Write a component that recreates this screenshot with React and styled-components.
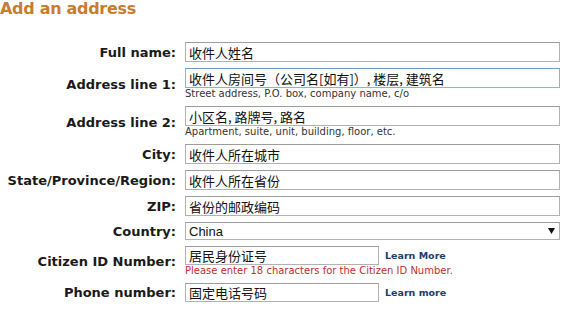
import React from 'react'
import styled, { createGlobalStyle } from 'styled-components'

const GlobalStyle = createGlobalStyle`
  body {
    margin: 0;
    background: #fff;
    font-family: "DejaVu Sans", Verdana, sans-serif;
    color: #111;
  }
`

const Page = styled.div`
  width: 577px;
  height: 319px;
  overflow: hidden;
`

const Title = styled.h1`
  margin: -1px 0 23px 0;
  font-size: 16px;
  line-height: 20px;
  font-weight: bold;
  letter-spacing: -0.3px;
  color: #c77d2e;
`

const Form = styled.div`
  display: grid;
  grid-template-columns: 176px 375px;
  column-gap: 9px;
  row-gap: 6px;
`

const Label = styled.div`
  align-self: center;
  text-align: right;
  font-size: 13px;
  font-weight: bold;
  white-space: nowrap;
  color: #1a1a1a;
`

const Field = styled.div`
  display: flex;
  flex-direction: column;
  align-items: flex-start;
`

const InputRow = styled.div`
  display: flex;
  align-items: center;
  gap: 6px;
`

const Input = styled.div`
  box-sizing: border-box;
  width: ${p => p.$width || 375}px;
  height: ${p => p.$height || 20}px;
  padding: 0 3px;
  border: 1px solid ${p => (p.$focus ? '#8fb0d8' : '#b2b2b2')};
  border-top-color: ${p => (p.$focus ? '#7a9ccb' : '#9c9c9c')};
  display: flex;
  align-items: center;
  font-family: "Noto Sans CJK SC", sans-serif;
  font-size: 13px;
  color: #111;
  white-space: nowrap;
  overflow: hidden;
`

const Select = styled(Input)`
  justify-content: space-between;
  font-family: "Liberation Sans", Arial, sans-serif;
  padding: 0 4px 0 3px;
`

const Hint = styled.div`
  font-size: 10px;
  line-height: 12px;
  color: ${p => (p.$error ? '#c0302a' : '#333')};
  white-space: nowrap;
`

const LearnLink = styled.a`
  font-size: 9.5px;
  font-weight: bold;
  color: #203e6b;
  text-decoration: none;
`

const Arrow = () => (
  <svg width="7" height="6" viewBox="0 0 7 6">
    <path d="M0 0 H7 L3.5 6 Z" fill="#111" />
  </svg>
)

const fields = [
  { label: 'Full name:', value: '收件人姓名' },
  { label: 'Address line 1:', value: '收件人房间号（公司名[如有]）, 楼层, 建筑名', hint: 'Street address, P.O. box, company name, c/o', focus: true },
  { label: 'Address line 2:', value: '小区名, 路牌号, 路名', hint: 'Apartment, suite, unit, building, floor, etc.' },
  { label: 'City:', value: '收件人所在城市' },
  { label: 'State/Province/Region:', value: '收件人所在省份' },
  { label: 'ZIP:', value: '省份的邮政编码' },
]

export default function App() {
  return (
    <Page>
      <GlobalStyle />
      <Title>Add an address</Title>
      <Form>
        {fields.map(f => (
          <React.Fragment key={f.label}>
            <Label>{f.label}</Label>
            <Field>
              <Input $focus={f.focus}>{f.value}</Input>
              {f.hint && <Hint>{f.hint}</Hint>}
            </Field>
          </React.Fragment>
        ))}
        <Label>Country:</Label>
        <Field>
          <Select $height={18}>
            <span>China</span>
            <Arrow />
          </Select>
        </Field>
        <Label>Citizen ID Number:</Label>
        <Field>
          <InputRow>
            <Input $width={194} $height={19}>居民身份证号</Input>
            <LearnLink href="#">Learn More</LearnLink>
          </InputRow>
          <Hint $error>Please enter 18 characters for the Citizen ID Number.</Hint>
        </Field>
        <Label>Phone number:</Label>
        <Field>
          <InputRow>
            <Input $width={194} $height={19}>固定电话号码</Input>
            <LearnLink href="#">Learn more</LearnLink>
          </InputRow>
        </Field>
      </Form>
    </Page>
  )
}
